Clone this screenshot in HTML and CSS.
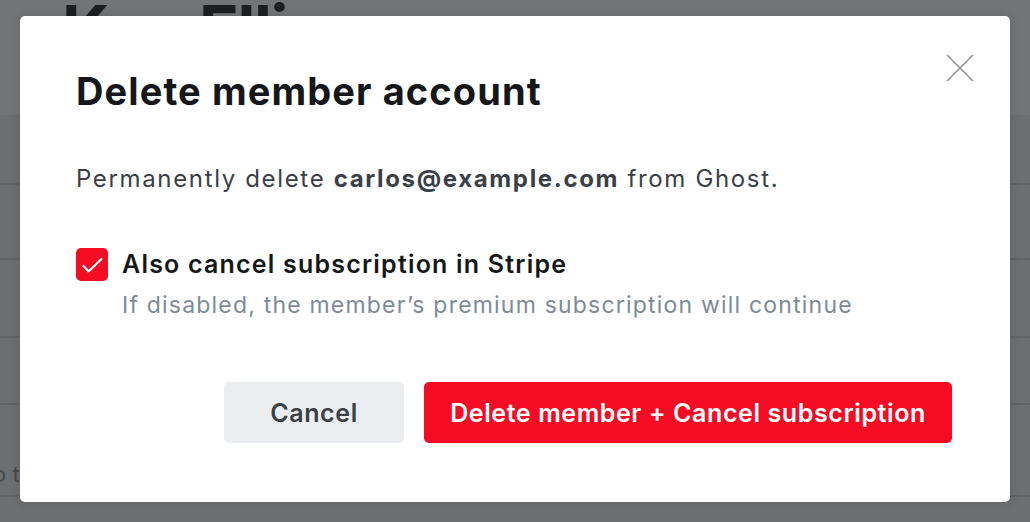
FILE: index.html
```html
<!DOCTYPE html>
<html lang="en">
  <head>
    <meta charset="UTF-8" />
    <meta name="viewport" content="width=device-width, initial-scale=1.0" />
    <title>Delete member account</title>
    <link rel="stylesheet" href="styles.css">
  </head>
  <body>
    <div class="page">
      <div class="page-head">
        <h1 class="page-title">Kyra Ellis</h1>
      </div>
      <div class="page-row page-row-a"></div>
      <div class="page-row page-row-b"></div>
      <div class="page-row page-row-c"></div>
      <div class="page-row page-row-d"></div>
      <div class="page-row page-row-e"><span class="page-note">o t</span></div>
    </div>

    <div class="modal">
      <button class="modal-close" aria-label="Close">
        <svg width="28" height="28" viewBox="0 0 28 28">
          <path d="M1 1 L27 27 M27 1 L1 27" stroke="#8e8e8e" stroke-width="1.5" fill="none" />
        </svg>
      </button>

      <h2 class="modal-title">Delete member account</h2>
      <p class="modal-text">Permanently delete <strong>carlos@example.com</strong> from Ghost.</p>

      <label class="check">
        <span class="check-box">
          <svg width="32" height="33" viewBox="0 0 32 33">
            <path d="M7.5 18 L12.5 23.5 L25.5 11" stroke="#fff" stroke-width="2.2" fill="none" stroke-linecap="round" stroke-linejoin="round" />
          </svg>
        </span>
        <span class="check-body">
          <span class="check-label">Also cancel subscription in Stripe</span>
          <span class="check-hint">If disabled, the member’s premium subscription will continue</span>
        </span>
      </label>

      <div class="modal-actions">
        <button class="btn btn-grey">Cancel</button>
        <button class="btn btn-red">Delete member + Cancel subscription</button>
      </div>
    </div>
  </body>
</html>
```

FILE: styles.css
```css
* {
  margin: 0;
  padding: 0;
  box-sizing: border-box;
}
html,
body {
  height: 100%;
}
body {
  overflow: hidden;
  background: #6d6e70;
  font-family: Inter, "Noto Sans", sans-serif;
  position: relative;
}
.page {
  display: flex;
  flex-direction: column;
}
.page-head {
  height: 115px;
  background: #737476;
}
.page-title {
  margin: -4px 0 0 62px;
  font-size: 66px;
  line-height: 1;
  font-weight: 700;
  color: #1d1e20;
  letter-spacing: -1.5px;
  word-spacing: -20px;
}
.page-row {
  border-bottom: 2px solid #626365;
}
.page-row-a {
  height: 70px;
}
.page-row-b {
  height: 75px;
}
.page-row-c {
  height: 78px;
}
.page-row-d {
  height: 67px;
}
.page-row-e {
  height: 92px;
  padding-top: 58px;
}
.page-note {
  display: block;
  margin-left: -7px;
  font-size: 22px;
  line-height: 1;
  color: #45474b;
}
.modal {
  position: absolute;
  top: 16px;
  left: 20px;
  width: 990px;
  height: 486px;
  background: #fff;
  border-radius: 5px;
  padding: 52px 58px 0 56px;
  box-shadow: 0 0 12px rgba(0, 0, 0, 0.12);
}
.modal-close {
  position: absolute;
  top: 38px;
  right: 36px;
  width: 28px;
  height: 28px;
  border: 0;
  background: none;
  display: flex;
}
.modal-title {
  font-size: 38px;
  line-height: 46px;
  font-weight: 700;
  color: #15171a;
  letter-spacing: 1.1px;
}
.modal-text {
  margin-top: 48px;
  font-size: 24px;
  line-height: 34px;
  color: #394047;
  letter-spacing: 1.65px;
}
.modal-text strong {
  font-weight: 700;
}
.check {
  display: flex;
  gap: 14px;
  margin-top: 51px;
}
.check-box {
  flex: none;
  width: 32px;
  height: 33px;
  margin-top: 1px;
  background: #f50b23;
  border-radius: 5px;
  display: flex;
}
.check-body {
  display: flex;
  flex-direction: column;
  gap: 7px;
}
.check-label {
  font-size: 25px;
  line-height: 34px;
  font-weight: 600;
  color: #15171a;
  letter-spacing: 1.2px;
}
.check-hint {
  font-size: 23px;
  line-height: 34px;
  color: #7c8b9a;
  letter-spacing: 1.2px;
}
.modal-actions {
  display: flex;
  justify-content: flex-end;
  gap: 20px;
  margin-top: 60px;
}
.btn {
  height: 61px;
  border: 0;
  border-radius: 5px;
  font-family: inherit;
  font-size: 25px;
  font-weight: 600;
  letter-spacing: 0.6px;
}
.btn-grey {
  width: 180px;
  background: #ebeef0;
  color: #394047;
}
.btn-red {
  width: 528px;
  background: #f50b23;
  color: #fff;
}
```
